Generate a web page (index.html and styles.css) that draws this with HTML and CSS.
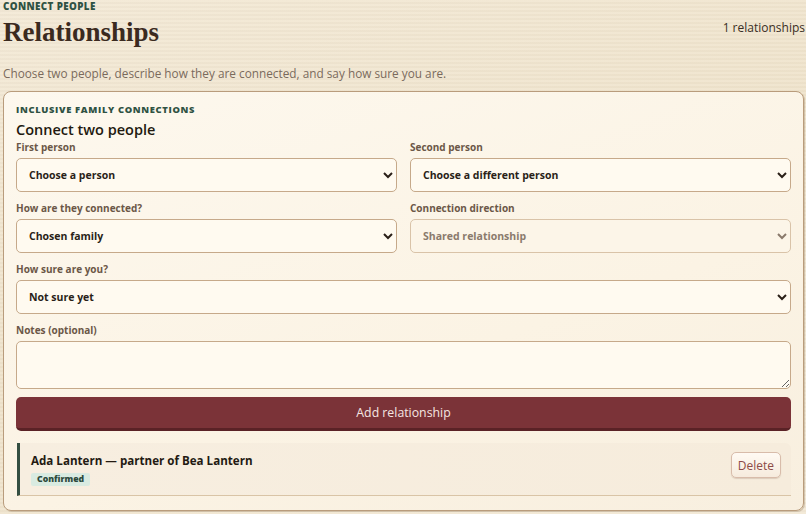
FILE: index.html
```html
<!DOCTYPE html>
<html lang="en">
<head>
<meta charset="utf-8">
<title>Relationships</title>
<link rel="stylesheet" href="styles.css">
</head>
<body>
<main class="page">
  <header class="page-head">
    <div class="head-text">
      <p class="eyebrow">Connect people</p>
      <h1 class="title">Relationships</h1>
    </div>
    <p class="count">1 relationships</p>
  </header>
  <p class="lede">Choose two people, describe how they are connected, and say how sure you are.</p>

  <section class="card">
    <p class="eyebrow card-eyebrow">Inclusive family connections</p>
    <h2 class="card-title">Connect two people</h2>
    <form class="form">
      <div class="grid">
        <label class="field">
          <span class="label">First person</span>
          <select class="control"><option>Choose a person</option></select>
        </label>
        <label class="field">
          <span class="label">Second person</span>
          <select class="control"><option>Choose a different person</option></select>
        </label>
        <label class="field">
          <span class="label">How are they connected?</span>
          <select class="control"><option>Chosen family</option></select>
        </label>
        <label class="field">
          <span class="label">Connection direction</span>
          <select class="control" disabled><option>Shared relationship</option></select>
        </label>
        <label class="field wide">
          <span class="label">How sure are you?</span>
          <select class="control"><option>Not sure yet</option></select>
        </label>
        <label class="field wide">
          <span class="label">Notes (optional)</span>
          <textarea class="control notes"></textarea>
        </label>
      </div>
      <button type="button" class="submit">Add relationship</button>
    </form>

    <ul class="list">
      <li class="item">
        <div class="item-text">
          <p class="item-title">Ada Lantern — partner of Bea Lantern</p>
          <span class="badge">Confirmed</span>
        </div>
        <button type="button" class="delete">Delete</button>
      </li>
    </ul>
  </section>
</main>
</body>
</html>
```

FILE: styles.css
```css
* { box-sizing: border-box; }

html, body {
  margin: 0;
  padding: 0;
}

body {
  font-family: "Open Sans", "Noto Sans", sans-serif;
  color: #2b2019;
  background:
    repeating-linear-gradient(180deg, rgba(255,255,255,0.08) 0 2px, rgba(0,0,0,0.015) 2px 4px),
    linear-gradient(160deg, #f3e9d6 0%, #efe3cb 50%, #f2e8d5 100%);
  min-height: 514px;
}

.page {
  padding: 1px 1px 0 3px;
}

.page-head {
  display: flex;
  justify-content: space-between;
  align-items: flex-start;
}

.eyebrow {
  margin: 0;
  font-family: "Open Sans", sans-serif;
  font-size: 9.8px;
  line-height: 12px;
  font-weight: 800;
  letter-spacing: 0.04em;
  text-transform: uppercase;
  color: #2f5243;
}

.title {
  margin: 2px 0 0;
  font-family: "Liberation Serif", "DejaVu Serif", serif;
  font-size: 27px;
  line-height: 34px;
  font-weight: 700;
  color: #3b2a1f;
}

.count {
  margin: 19px 0 0;
  font-size: 12px;
  line-height: 16px;
  color: #3a2e25;
}

.lede {
  margin: 16px 0 0;
  font-size: 11.8px;
  line-height: 17px;
  color: #7a6a5c;
}

.card {
  margin-top: 9px;
  border: 1px solid #b99c7c;
  border-radius: 8px;
  background: linear-gradient(160deg, #fdf8ee 0%, #fbf3e4 60%, #f8efdf 100%);
  box-shadow: 1px 1px 0 rgba(120, 90, 60, 0.25);
  padding: 12px 12px 14px;
  width: 801px;
}

.card-eyebrow {
  font-size: 9.4px;
  letter-spacing: 0.07em;
}

.card-title {
  margin: 4px 0 0;
  font-size: 14.5px;
  line-height: 20px;
  font-weight: 600;
  color: #22190f;
}

.form {
  display: flex;
  flex-direction: column;
  gap: 8px;
}

.grid {
  display: grid;
  grid-template-columns: 1fr 1fr;
  column-gap: 13px;
  row-gap: 9px;
}

.field {
  display: flex;
  flex-direction: column;
  gap: 4px;
}

.wide { grid-column: 1 / -1; }

.label {
  font-size: 10px;
  line-height: 14px;
  font-weight: 700;
  color: #6b5747;
}

.control {
  font-family: "Open Sans", sans-serif;
  font-size: 10.5px;
  font-weight: 700;
  color: #2a1f18;
  background: #fffaf0;
  border: 1px solid #c6a98a;
  border-radius: 5px;
  height: 34px;
  padding: 0 8px 0 8px;
  width: 100%;
}

.control:disabled {
  color: #8a7a6c;
  background: #fcf5e8;
  border-color: #d9c3a8;
  opacity: 1;
}

.notes {
  height: 48px;
  resize: vertical;
  padding: 6px 8px;
  display: block;
}

.submit {
  height: 34px;
  border: 0;
  border-bottom: 3px solid #5a2226;
  border-radius: 5px;
  background: #7b3338;
  color: #f6e6e2;
  font-family: "Open Sans", sans-serif;
  font-size: 12.3px;
  padding: 0;
  margin-top: 0;
}

.list {
  list-style: none;
  margin: 12px 0 0;
  padding: 0;
}

.item {
  display: flex;
  justify-content: space-between;
  align-items: center;
  min-height: 53px;
  margin-left: 1px;
  padding: 0 10px 1px 11px;
  border-left: 3px solid #344f42;
  border-bottom: 1px solid #d9c4a6;
  border-radius: 0 6px 0 0;
  background: linear-gradient(90deg, #f7eee0 0%, #f6ecdc 100%);
}

.item-text {
  display: flex;
  flex-direction: column;
  align-items: flex-start;
  gap: 4px;
}

.item-title {
  margin: 0;
  font-size: 11.6px;
  line-height: 17px;
  font-weight: 700;
  color: #231a12;
}

.badge {
  font-size: 8.7px;
  line-height: 13px;
  font-weight: 800;
  padding: 0 6px;
  border-radius: 2px;
  background: #d9ebe1;
  color: #2d4a3c;
}

.delete {
  align-self: flex-start;
  margin-top: 9px;
  font-family: "Open Sans", sans-serif;
  font-size: 12px;
  color: #8c4a48;
  background: linear-gradient(180deg, #fffaf3 0%, #f6ebdd 100%);
  border: 1px solid #d8bcaa;
  border-radius: 5px;
  height: 26px;
  padding: 0 6px;
  box-shadow: 0 1px 1px rgba(120, 80, 60, 0.2);
}
```
